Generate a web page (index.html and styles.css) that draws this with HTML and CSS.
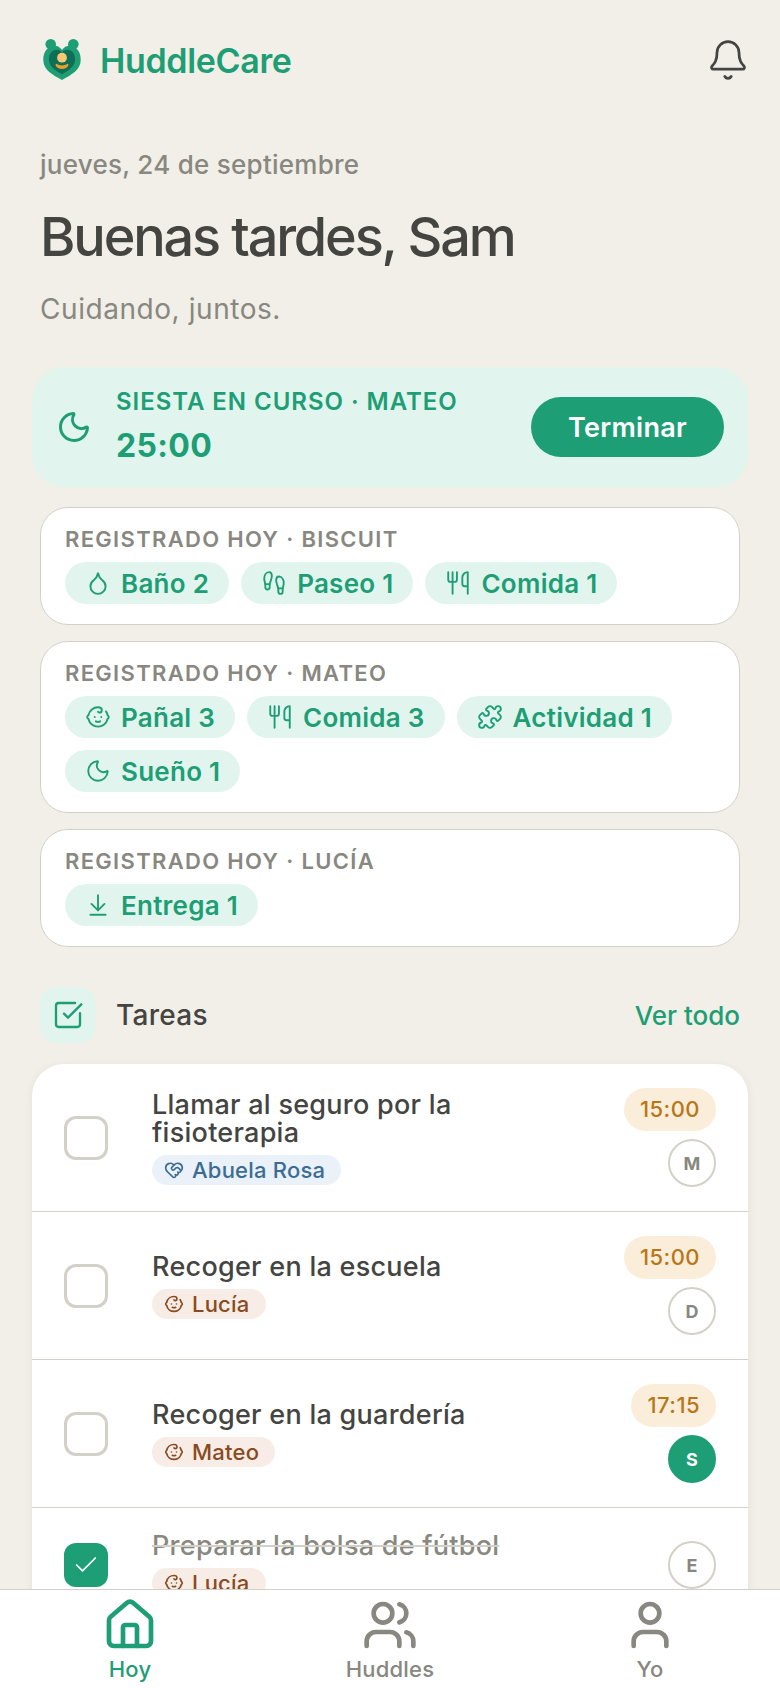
FILE: index.html
```html
<!DOCTYPE html>
<html lang="es">
<head>
  <meta charset="UTF-8" />
  <meta name="viewport" content="width=device-width, initial-scale=1.0"/>
  <title>HuddleCare</title>
  <link rel="stylesheet" href="styles.css">
</head>
<body>
  <!-- Shared icons -->
  <svg class="sprite" aria-hidden="true">
    <symbol id="i-moon" viewBox="0 0 24 24"><path d="M20.985 12.486a9 9 0 1 1-9.473-9.472c.405-.022.617.46.402.803a6 6 0 0 0 8.268 8.268c.344-.215.825-.004.803.401"/></symbol>
    <symbol id="i-drop" viewBox="0 0 24 24"><path d="M12 22a7 7 0 0 0 7-7c0-2-1-3.9-3-5.5s-3.5-4-4-6.5c-.5 2.5-2 4.9-4 6.5S5 13 5 15a7 7 0 0 0 7 7z"/></symbol>
    <symbol id="i-steps" viewBox="0 0 24 24"><path d="M4 16v-2.38C4 11.5 2.97 10.5 3 8c.03-2.72 1.49-6 4.5-6C9.37 2 10 3.8 10 5.5c0 3.11-2 5.66-2 8.68V16a2 2 0 1 1-4 0Z"/><path d="M20 20v-2.38c0-2.12 1.03-3.12 1-5.62-.03-2.72-1.49-6-4.5-6C14.63 6 14 7.8 14 9.5c0 3.11 2 5.66 2 8.68V20a2 2 0 1 0 4 0Z"/><path d="M16 17h4M4 13h4"/></symbol>
    <symbol id="i-food" viewBox="0 0 24 24"><path d="M3 2v7c0 1.1.9 2 2 2h4a2 2 0 0 0 2-2V2M7 2v20"/><path d="M21 15V2a5 5 0 0 0-5 5v6c0 1.1.9 2 2 2h3Zm0 0v7"/></symbol>
    <symbol id="i-baby" viewBox="0 0 24 24"><path d="M10 16c.5.3 1.2.5 2 .5s1.5-.2 2-.5M15 12h.01M9 12h.01"/><path d="M19.38 6.813A9 9 0 0 1 20.8 10.2a2 2 0 0 1 0 3.6 9 9 0 0 1-17.6 0 2 2 0 0 1 0-3.6A9 9 0 0 1 12 3c2 0 3.5 1.1 3.5 2.5s-.9 2.5-2 2.5c-.8 0-1.5-.4-1.5-1"/></symbol>
    <symbol id="i-puzzle" viewBox="0 0 24 24"><path d="M15.39 4.39a1 1 0 0 0 1.68-.474 2.5 2.5 0 1 1 3.014 3.015 1 1 0 0 0-.474 1.68l1.683 1.682a2.414 2.414 0 0 1 0 3.414L19.61 15.39a1 1 0 0 1-1.68-.474 2.5 2.5 0 1 0-3.014 3.015 1 1 0 0 1 .474 1.68l-1.683 1.682a2.414 2.414 0 0 1-3.414 0L8.61 19.61a1 1 0 0 0-1.68.474 2.5 2.5 0 1 1-3.014-3.015 1 1 0 0 0 .474-1.68l-1.683-1.682a2.414 2.414 0 0 1 0-3.414L4.39 8.61a1 1 0 0 1 1.68.474 2.5 2.5 0 1 0 3.014-3.015 1 1 0 0 1-.474-1.68l1.683-1.682a2.414 2.414 0 0 1 3.414 0z"/></symbol>
    <symbol id="i-down" viewBox="0 0 24 24"><path d="M12 17V3M6 11l6 6 6-6M19 21H5"/></symbol>
    <symbol id="i-heart" viewBox="0 0 24 24"><path d="M19.414 14.414C21 12.828 22 11.5 22 9.5a5.5 5.5 0 0 0-9.591-3.676.6.6 0 0 1-.818.001A5.5 5.5 0 0 0 2 9.5c0 2.3 1.5 4 3 5.5l5.535 5.362a2 2 0 0 0 2.879.052 2.12 2.12 0 0 0-.004-3 2.124 2.124 0 1 0 3-3 2.124 2.124 0 0 0 3.004 0 2 2 0 0 0 0-2.828l-1.881-1.882a2.41 2.41 0 0 0-3.409 0l-1.71 1.71a2 2 0 0 1-2.828 0 2 2 0 0 1 0-2.828l2.823-2.762"/></symbol>
  </svg>

  <header class="topbar">
    <div class="brand">
      <svg class="logo" viewBox="0 0 44 44" aria-hidden="true">
        <g fill="#1D9E75">
          <circle cx="10.7" cy="6.3" r="5.3"/>
          <circle cx="33.3" cy="6.3" r="5.3"/>
          <path d="M22 12C19 7 13 6.500 9 9.500C4.500 12.500 3.300 17 3.300 22C3.300 32 13 37 22 42C31 37 40.700 32 40.700 22C40.700 17 39.500 12.500 35 9.500C31 6.500 25 7 22 12Z"/>
        </g>
        <path fill="#0F6E56" d="M22 14.500C19.500 11 15 11 12 13.500C9.500 15.500 9 18.500 9 21.500C9 28.500 15 32.500 22 36.300C29 32.500 35 28.500 35 21.500C35 18.500 34.500 15.500 32 13.500C29 11 24.500 11 22 14.500Z"/>
        <circle fill="#FAC775" cx="22" cy="19.700" r="4.900"/>
        <path fill="#EF9F27" d="M16.600 25.700C19.500 28 24.500 28 27.400 25.700C28.600 25.500 28.800 27.500 27.500 28.800C24.500 31.700 19.500 31.700 16.500 28.800C15.200 27.500 15.400 25.500 16.600 25.700Z"/>
      </svg>
      <span class="brand-name">HuddleCare</span>
    </div>
    <button class="bell" aria-label="Notificaciones">
      <svg class="icon" viewBox="0 0 24 24"><path d="M10.268 21a2 2 0 0 0 3.464 0"/><path d="M3.262 15.326A1 1 0 0 0 4 17h16a1 1 0 0 0 .74-1.673C19.41 13.956 18 12.499 18 8A6 6 0 0 0 6 8c0 4.499-1.411 5.956-2.738 7.326"/></svg>
    </button>
  </header>

  <main class="content">
    <section class="greeting">
      <p class="date">jueves, 24 de septiembre</p>
      <h1>Buenas tardes, Sam</h1>
      <p class="tagline">Cuidando, juntos.</p>
    </section>

    <section class="nap">
      <svg class="icon"><use href="#i-moon"/></svg>
      <div class="nap-text">
        <p class="nap-label">Siesta en curso · Mateo</p>
        <p class="nap-time">25:00</p>
      </div>
      <button class="btn-end">Terminar</button>
    </section>

    <div class="logs">
      <section class="log">
        <h2>Registrado hoy · Biscuit</h2>
        <div class="chips">
          <span class="chip"><svg class="icon"><use href="#i-drop"/></svg>Baño 2</span>
          <span class="chip"><svg class="icon"><use href="#i-steps"/></svg>Paseo 1</span>
          <span class="chip"><svg class="icon"><use href="#i-food"/></svg>Comida 1</span>
        </div>
      </section>
      <section class="log">
        <h2>Registrado hoy · Mateo</h2>
        <div class="chips">
          <span class="chip"><svg class="icon"><use href="#i-baby"/></svg>Pañal 3</span>
          <span class="chip"><svg class="icon"><use href="#i-food"/></svg>Comida 3</span>
          <span class="chip"><svg class="icon"><use href="#i-puzzle"/></svg>Actividad 1</span>
          <span class="chip"><svg class="icon"><use href="#i-moon"/></svg>Sueño 1</span>
        </div>
      </section>
      <section class="log">
        <h2>Registrado hoy · Lucía</h2>
        <div class="chips">
          <span class="chip"><svg class="icon"><use href="#i-down"/></svg>Entrega 1</span>
        </div>
      </section>
    </div>

    <div class="section-head">
      <span class="section-icon">
        <svg class="icon" viewBox="0 0 24 24"><path d="M21 10.656V19a2 2 0 0 1-2 2H5a2 2 0 0 1-2-2V5a2 2 0 0 1 2-2h12.344"/><path d="m9 11 3 3L22 4"/></svg>
      </span>
      <h2>Tareas</h2>
      <a href="#tareas">Ver todo</a>
    </div>

    <ul class="tasks" id="tareas">
      <li class="task">
        <input type="checkbox" id="task1">
        <div class="task-body">
          <label for="task1">Llamar al seguro por la fisioterapia</label>
          <span class="tag tag-blue"><svg class="icon"><use href="#i-heart"/></svg>Abuela Rosa</span>
        </div>
        <div class="task-meta">
          <time class="due">15:00</time>
          <span class="avatar">M</span>
        </div>
      </li>
      <li class="task">
        <input type="checkbox" id="task2">
        <div class="task-body">
          <label for="task2">Recoger en la escuela</label>
          <span class="tag"><svg class="icon"><use href="#i-baby"/></svg>Lucía</span>
        </div>
        <div class="task-meta">
          <time class="due">15:00</time>
          <span class="avatar">D</span>
        </div>
      </li>
      <li class="task">
        <input type="checkbox" id="task3">
        <div class="task-body">
          <label for="task3">Recoger en la guardería</label>
          <span class="tag"><svg class="icon"><use href="#i-baby"/></svg>Mateo</span>
        </div>
        <div class="task-meta">
          <time class="due">17:15</time>
          <span class="avatar avatar-me">S</span>
        </div>
      </li>
      <li class="task">
        <input type="checkbox" id="task4" checked>
        <div class="task-body">
          <label for="task4">Preparar la bolsa de fútbol</label>
          <span class="tag"><svg class="icon"><use href="#i-baby"/></svg>Lucía</span>
        </div>
        <div class="task-meta">
          <span class="avatar">E</span>
        </div>
      </li>
    </ul>
  </main>

  <nav class="tabbar">
    <a href="#hoy" class="active">
      <svg class="icon" viewBox="0 0 24 24"><path d="M15 21v-8a1 1 0 0 0-1-1h-4a1 1 0 0 0-1 1v8"/><path d="M3 10a2 2 0 0 1 .709-1.528l7-5.999a2 2 0 0 1 2.582 0l7 5.999A2 2 0 0 1 21 10v9a2 2 0 0 1-2 2H5a2 2 0 0 1-2-2z"/></svg>
      Hoy
    </a>
    <a href="#huddles">
      <svg class="icon" viewBox="0 0 24 24"><path d="M16 21v-2a4 4 0 0 0-4-4H6a4 4 0 0 0-4 4v2"/><circle cx="9" cy="7" r="4"/><path d="M16 3.128a4 4 0 0 1 0 7.744M22 21v-2a4 4 0 0 0-3-3.870"/></svg>
      Huddles
    </a>
    <a href="#yo">
      <svg class="icon" viewBox="0 0 24 24"><path d="M19 21v-2a4 4 0 0 0-4-4H9a4 4 0 0 0-4 4v2"/><circle cx="12" cy="7" r="4"/></svg>
      Yo
    </a>
  </nav>
</body>
</html>
```

FILE: styles.css
```css
:root {
  --green: #1D9E75;
  --mint: #E1F5EE;
  --bg: #F1EFE8;
  --text: #444441;
  --muted: #888780;
  --line: #D3D1C7;
}

* {
  box-sizing: border-box;
  margin: 0;
  padding: 0;
}

body {
  font-family: Inter, 'Liberation Sans', sans-serif;
  background: var(--bg);
  color: var(--text);
  height: 100vh;
  display: flex;
  flex-direction: column;
}

a {
  text-decoration: none;
}

button {
  font: inherit;
  border: none;
  cursor: pointer;
}

.sprite {
  display: none;
}

.icon {
  flex: none;
  fill: none;
  stroke: currentColor;
  stroke-width: 1.5;
  stroke-linecap: round;
  stroke-linejoin: round;
}

/* Header */
.topbar {
  flex: none;
  display: flex;
  align-items: center;
  justify-content: space-between;
  height: 120px;
  padding: 0 30px 0 40px;
}

.brand {
  display: flex;
  align-items: center;
  gap: 16px;
}

.logo {
  width: 44px;
  height: 44px;
}

.brand-name {
  font-size: 34px;
  font-weight: 600;
  letter-spacing: -0.01em;
  color: var(--green);
}

.bell {
  background: none;
  color: var(--text);
  height: 44px;
}

.bell .icon {
  width: 44px;
  height: 44px;
}

/* Content */
.content {
  flex: 1;
  min-height: 0;
  overflow-y: auto;
  scrollbar-width: none;
  padding: 25px 32px;
}

.greeting {
  display: flex;
  flex-direction: column;
  gap: 20px;
  padding: 0 8px;
}

.date {
  font-size: 26px;
  font-weight: 500;
  line-height: 40px;
  letter-spacing: 0.01em;
  color: var(--muted);
}

h1 {
  font-size: 54px;
  font-weight: 500;
  line-height: 64px;
  letter-spacing: -0.04em;
}

.tagline {
  font-size: 28px;
  line-height: 40px;
  letter-spacing: 0.02em;
  color: var(--muted);
}

/* Nap banner */
.nap {
  display: flex;
  align-items: center;
  gap: 24px;
  margin-top: 38px;
  padding: 18px 24px;
  border-radius: 32px;
  background: var(--mint);
  color: var(--green);
}

.nap .icon {
  width: 36px;
  height: 36px;
  stroke-width: 2;
}

.nap-text {
  flex: 1;
  display: flex;
  flex-direction: column;
  gap: 4px;
}

.nap-label {
  font-size: 24px;
  font-weight: 600;
  line-height: 34px;
  letter-spacing: 0.04em;
  text-transform: uppercase;
}

.nap-time {
  font-size: 32px;
  font-weight: 700;
  line-height: 46px;
  letter-spacing: 0.01em;
}

.btn-end {
  height: 60px;
  padding: 0 37px;
  border-radius: 30px;
  background: var(--green);
  color: #fff;
  font-size: 27px;
  font-weight: 600;
  letter-spacing: 0.01em;
}

/* Daily logs */
.logs {
  display: flex;
  flex-direction: column;
  gap: 16px;
  margin: 20px 8px 40px;
}

.log {
  padding: 20px 24px;
  border: 1px solid var(--line);
  border-radius: 28px;
  background: #fff;
}

.log h2 {
  margin-bottom: 12px;
  font-size: 22px;
  font-weight: 600;
  line-height: 22px;
  letter-spacing: 0.06em;
  text-transform: uppercase;
  color: var(--muted);
}

.chips {
  display: flex;
  flex-wrap: wrap;
  gap: 12px;
}

.chip {
  display: flex;
  align-items: center;
  gap: 10px;
  height: 42px;
  padding: 0 20px;
  border-radius: 21px;
  background: var(--mint);
  color: var(--green);
  font-size: 26px;
  font-weight: 600;
  letter-spacing: 0.01em;
}

.chip .icon {
  width: 26px;
  height: 26px;
  stroke-width: 1.75;
}

/* Tasks */
.section-head {
  display: flex;
  align-items: center;
  gap: 20px;
  margin: 0 8px 21px;
}

.section-icon {
  display: flex;
  align-items: center;
  justify-content: center;
  width: 56px;
  height: 56px;
  border-radius: 16px;
  background: var(--mint);
  color: var(--green);
}

.section-icon .icon {
  width: 32px;
  height: 32px;
  stroke-width: 1.75;
}

.section-head h2 {
  flex: 1;
  font-size: 28px;
  font-weight: 500;
  letter-spacing: 0.01em;
}

.section-head a {
  font-size: 26px;
  font-weight: 500;
  color: var(--green);
}

.tasks {
  list-style: none;
  border-radius: 32px;
  background: #fff;
  box-shadow: 0 2px 8px rgba(68, 68, 65, 0.08);
}

.task {
  display: flex;
  align-items: center;
  padding: 24px 32px;
  border-bottom: 1px solid var(--line);
}

.task:last-child {
  border-bottom: none;
}

.task input {
  flex: none;
  appearance: none;
  width: 44px;
  height: 44px;
  margin-right: 44px;
  border: 3px solid var(--line);
  border-radius: 12px;
  background: #fff;
}

.task input:checked {
  border: none;
  background: var(--green) url("data:image/svg+xml,%3Csvg xmlns='http://www.w3.org/2000/svg' viewBox='0 0 24 24' fill='none' stroke='white' stroke-width='1.500' stroke-linecap='round' stroke-linejoin='round'%3E%3Cpath d='M20 6 9 17l-5-5'/%3E%3C/svg%3E") center / 28px no-repeat;
}

.task-body {
  flex: 1;
  display: flex;
  flex-direction: column;
  align-items: flex-start;
  gap: 8px;
}

.task-body label {
  font-size: 27px;
  font-weight: 500;
  line-height: 28px;
  letter-spacing: 0.01em;
}

.task input:checked + .task-body label {
  color: var(--muted);
  text-decoration: line-through;
  text-decoration-color: var(--line);
}

.tag {
  display: flex;
  align-items: center;
  gap: 8px;
  height: 30px;
  padding: 0 16px 0 12px;
  border-radius: 15px;
  background: #F8ECE6;
  color: #8A4A20;
  font-size: 22px;
  font-weight: 500;
  letter-spacing: 0.01em;
}

.tag-blue {
  background: #EAF1F8;
  color: #3B6D94;
}

.tag .icon {
  width: 20px;
  height: 20px;
  stroke-width: 2;
}

.task-meta {
  display: flex;
  flex-direction: column;
  align-items: flex-end;
  gap: 8px;
  margin-left: 32px;
}

.due {
  padding: 0 16px;
  border-radius: 22px;
  background: #FAEEDA;
  color: #BA7517;
  font-size: 22px;
  font-weight: 500;
  line-height: 43px;
  letter-spacing: 0.02em;
}

.avatar {
  display: flex;
  align-items: center;
  justify-content: center;
  width: 48px;
  height: 48px;
  border: 2px solid var(--line);
  border-radius: 50%;
  font-size: 18px;
  font-weight: 700;
  color: var(--muted);
}

.avatar-me {
  border-color: var(--green);
  background: var(--green);
  color: #fff;
}

/* Bottom tabs */
.tabbar {
  flex: none;
  display: grid;
  grid-template-columns: repeat(3, 1fr);
  padding: 7px 0;
  border-top: 1px solid var(--line);
  background: #fff;
}

.tabbar a {
  display: flex;
  flex-direction: column;
  align-items: center;
  gap: 4px;
  color: var(--muted);
  font-size: 22px;
  font-weight: 500;
  line-height: 24px;
  letter-spacing: 0.01em;
}

.tabbar .active {
  color: var(--green);
}

.tabbar .icon {
  width: 56px;
  height: 56px;
  stroke-width: 2;
}
```
